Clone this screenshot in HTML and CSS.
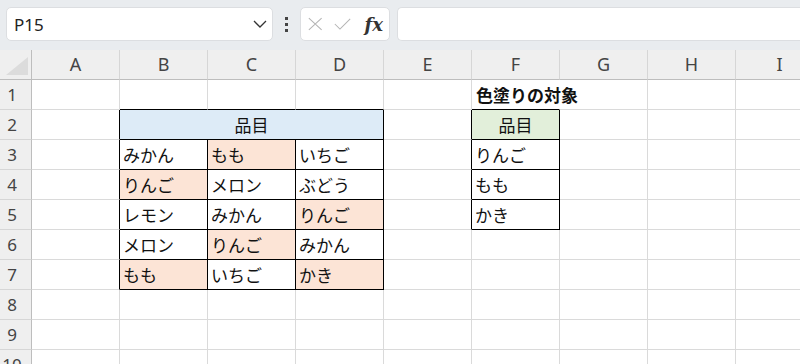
FILE: index.html
```html
<!DOCTYPE html>
<html>

<head>
    <title>色塗りの対象</title>
    <link rel="stylesheet" href="styles.css">
</head>

<body>
    <div class="app">
        <div class="formula-bar">
            <div class="name-box">
                <span class="name-text">P15</span>
                <svg class="chevron" width="14" height="8" viewBox="0 0 14 8">
                    <path d="M1 1 L7 7 L13 1" fill="none" stroke="#333" stroke-width="1.3"/>
                </svg>
            </div>
            <div class="dots">
                <span></span><span></span><span></span>
            </div>
            <div class="fx-box">
                <svg width="17" height="16" viewBox="0 0 17 16">
                    <path d="M1 1 L16 15 M16 1 L1 15" fill="none" stroke="#b4b4b4" stroke-width="1.2"/>
                </svg>
                <svg width="20" height="14" viewBox="0 0 20 14">
                    <path d="M1 7 L7 13 L19 1" fill="none" stroke="#b4b4b4" stroke-width="1.2"/>
                </svg>
                <span class="fx">fx</span>
            </div>
            <div class="formula-input"></div>
        </div>

        <div class="sheet">
            <!-- column headers -->
            <div class="corner"><div class="corner-tri"></div></div>
            <div class="ch">A</div>
            <div class="ch">B</div>
            <div class="ch">C</div>
            <div class="ch">D</div>
            <div class="ch">E</div>
            <div class="ch">F</div>
            <div class="ch">G</div>
            <div class="ch">H</div>
            <div class="ch">I</div>

            <!-- row 1 -->
            <div class="rh">1</div>
            <div class="c"></div>
            <div class="c bt"></div>
            <div class="c bt"></div>
            <div class="c bt"></div>
            <div class="c"></div>
            <div class="c bt spill"><b>色塗りの対象</b></div>
            <div class="c"></div>
            <div class="c"></div>
            <div class="c"></div>

            <!-- row 2 -->
            <div class="rh">2</div>
            <div class="c bl"></div>
            <div class="c t blue center span3">品目</div>
            <div class="c bl"></div>
            <div class="c t green center">品目</div>
            <div class="c"></div>
            <div class="c"></div>
            <div class="c"></div>

            <!-- row 3 -->
            <div class="rh">3</div>
            <div class="c bl"></div>
            <div class="c t">みかん</div>
            <div class="c t orange">もも</div>
            <div class="c t">いちご</div>
            <div class="c bl"></div>
            <div class="c t">りんご</div>
            <div class="c"></div>
            <div class="c"></div>
            <div class="c"></div>

            <!-- row 4 -->
            <div class="rh">4</div>
            <div class="c bl"></div>
            <div class="c t orange">りんご</div>
            <div class="c t">メロン</div>
            <div class="c t">ぶどう</div>
            <div class="c bl"></div>
            <div class="c t">もも</div>
            <div class="c"></div>
            <div class="c"></div>
            <div class="c"></div>

            <!-- row 5 -->
            <div class="rh">5</div>
            <div class="c bl"></div>
            <div class="c t">レモン</div>
            <div class="c t">みかん</div>
            <div class="c t orange">りんご</div>
            <div class="c bl"></div>
            <div class="c t">かき</div>
            <div class="c"></div>
            <div class="c"></div>
            <div class="c"></div>

            <!-- row 6 -->
            <div class="rh">6</div>
            <div class="c bl"></div>
            <div class="c t">メロン</div>
            <div class="c t orange">りんご</div>
            <div class="c t">みかん</div>
            <div class="c"></div>
            <div class="c"></div>
            <div class="c"></div>
            <div class="c"></div>
            <div class="c"></div>

            <!-- row 7 -->
            <div class="rh">7</div>
            <div class="c bl"></div>
            <div class="c t orange">もも</div>
            <div class="c t">いちご</div>
            <div class="c t orange">かき</div>
            <div class="c"></div>
            <div class="c"></div>
            <div class="c"></div>
            <div class="c"></div>
            <div class="c"></div>

            <!-- row 8 -->
            <div class="rh">8</div>
            <div class="c"></div><div class="c"></div><div class="c"></div><div class="c"></div>
            <div class="c"></div><div class="c"></div><div class="c"></div><div class="c"></div><div class="c"></div>

            <!-- row 9 -->
            <div class="rh">9</div>
            <div class="c"></div><div class="c"></div><div class="c"></div><div class="c"></div>
            <div class="c"></div><div class="c"></div><div class="c"></div><div class="c"></div><div class="c"></div>

            <!-- row 10 -->
            <div class="rh">10</div>
            <div class="c"></div><div class="c"></div><div class="c"></div><div class="c"></div>
            <div class="c"></div><div class="c"></div><div class="c"></div><div class="c"></div><div class="c"></div>
        </div>
    </div>
</body>

</html>
```

FILE: styles.css
```css
html, body {
    margin: 0;
    padding: 0;
    width: 800px;
    height: 364px;
    overflow: hidden;
    background: #fff;
}

.app {
    font-family: "Noto Sans", "Noto Sans CJK JP", sans-serif;
    color: #222;
}

/* top formula bar */
.formula-bar {
    display: flex;
    align-items: center;
    height: 50px;
    padding: 0 0 0 6px;
    box-sizing: border-box;
    background: #e9ecef;
}

.name-box {
    display: flex;
    align-items: center;
    justify-content: space-between;
    width: 267px;
    height: 34px;
    margin-top: -2px;
    padding: 0 5px 0 7px;
    box-sizing: border-box;
    background: #fff;
    border: 1px solid #dcdee1;
    border-radius: 5px;
}

.name-text {
    font-size: 17px;
    color: #222;
}

.dots {
    display: flex;
    flex-direction: column;
    gap: 3px;
    width: 27px;
    align-items: center;
    margin-top: -2px;
}

.dots span {
    width: 3px;
    height: 3px;
    background: #444;
}

.fx-box {
    display: flex;
    align-items: center;
    gap: 12px;
    width: 90px;
    height: 34px;
    margin-top: -2px;
    padding: 0 6px 0 7px;
    box-sizing: border-box;
    background: #fff;
    border: 1px solid #dcdee1;
    border-radius: 5px;
}

.fx {
    font-family: "DejaVu Serif", "Liberation Serif", serif;
    font-style: italic;
    font-weight: bold;
    font-size: 18px;
    color: #333;
    margin-left: 1px;
}

.formula-input {
    flex: 1;
    height: 34px;
    margin-top: -2px;
    margin-left: 7px;
    box-sizing: border-box;
    background: #fff;
    border: 1px solid #dcdee1;
    border-right: none;
    border-radius: 5px 0 0 5px;
}

/* sheet grid */
.sheet {
    display: grid;
    grid-template-columns: 32px repeat(9, 88px);
    grid-auto-rows: 30px;
}

.corner {
    background: #efefef;
    border-right: 1px solid #bdbdbd;
    border-bottom: 1px solid #bdbdbd;
    position: relative;
}

.corner-tri {
    position: absolute;
    right: 3px;
    bottom: 4px;
    width: 0;
    height: 0;
    border-left: 22px solid transparent;
    border-bottom: 18px solid #dcdcdc;
}

.ch {
    background: #efefef;
    border-bottom: 1px solid #bdbdbd;
    border-right: 1px solid #d6d6d6;
    text-align: center;
    font-size: 18px;
    line-height: 29px;
    color: #444;
}

.rh {
    background: #efefef;
    border-right: 1px solid #bdbdbd;
    border-bottom: 1px solid #d6d6d6;
    padding-right: 7px;
    text-align: center;
    font-size: 17px;
    line-height: 29px;
    color: #444;
}

.c {
    border-right: 1px solid #dadada;
    border-bottom: 1px solid #dadada;
    padding: 0 3px;
    font-family: "Noto Sans CJK JP", sans-serif;
    font-size: 17px;
    line-height: 29px;
    color: #111;
    white-space: nowrap;
    overflow: hidden;
}

.c.spill {
    overflow: visible;
    border-right-color: transparent;
    padding-left: 4px;
}

.c.spill b {
    font-size: 17px;
}

.c.t {
    border-right-color: #000;
    border-bottom-color: #000;
}

.c.bl {
    border-right-color: #000;
}

.c.bt {
    border-bottom-color: #000;
}

.span3 {
    grid-column: span 3;
}

.center {
    text-align: center;
}

.blue {
    background: #ddebf7;
}

.green {
    background: #e2efda;
}

.orange {
    background: #fce4d6;
}
```
